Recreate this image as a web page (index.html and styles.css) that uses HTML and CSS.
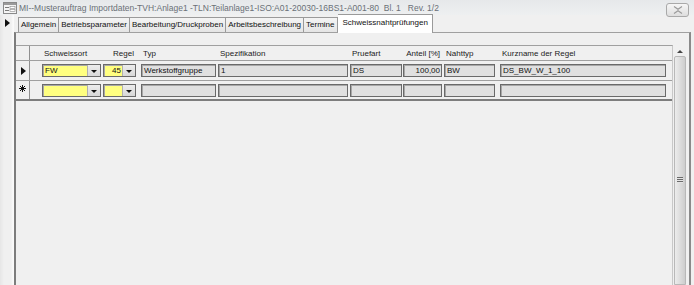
FILE: index.html
```html
<!DOCTYPE html>
<html lang="de">
<head>
    <meta charset="UTF-8" />
    <title>Schweissnahtprüfungen</title>
    <link rel="stylesheet" href="styles.css">
</head>
<body>
    <div class="titlebar">
        <svg class="app-icon" width="14" height="12" viewBox="0 0 14 12">
            <rect x="0.5" y="0.5" width="13" height="11" fill="#f4f4f4" stroke="#8a8a8a"/>
            <rect x="1" y="1" width="12" height="2" fill="#9a9a9a"/>
            <rect x="2" y="5" width="4" height="1" fill="#7a7a7a"/>
            <rect x="2" y="8" width="4" height="1" fill="#7a7a7a"/>
            <rect x="7" y="4.5" width="5" height="2" fill="#fff" stroke="#8a8a8a" stroke-width="0.6"/>
            <rect x="7" y="7.5" width="5" height="2" fill="#fff" stroke="#8a8a8a" stroke-width="0.6"/>
        </svg>
        <span class="title">MI--Musterauftrag Importdaten-TVH:Anlage1 -TLN:Teilanlage1-ISO:A01-20030-16BS1-A001-80&nbsp; Bl. 1 &nbsp; Rev. 1/2</span>
        <span class="close-btn">
            <svg width="10" height="8" viewBox="0 0 10 8">
                <path d="M1 0.5 L5 3.2 L9 0.5 M1 7.5 L5 4.8 L9 7.5" fill="none" stroke="#9a9a9a" stroke-width="1.2"/>
            </svg>
        </span>
    </div>

    <div class="main">
        <div class="recsel">
            <span class="rec-arrow"></span>
        </div>
        <div class="tabctl">
            <div class="tabs">
                <span class="tab">Allgemein</span>
                <span class="tab">Betriebsparameter</span>
                <span class="tab">Bearbeitung/Druckproben</span>
                <span class="tab">Arbeitsbeschreibung</span>
                <span class="tab">Termine</span>
                <span class="tab active">Schweissnahtprüfungen</span>
            </div>
            <div class="panel">
                <div class="sub-top"></div>
                <div class="sub">
                    <div class="sub-body">
                        <div class="row head">
                            <div class="sel"></div>
                            <div class="cell c-ort">Schweissort</div>
                            <div class="cell c-regel right">Regel</div>
                            <div class="cell c-typ">Typ</div>
                            <div class="cell c-spez">Spezifikation</div>
                            <div class="cell c-pruef">Pruefart</div>
                            <div class="cell c-anteil right">Anteil [%]</div>
                            <div class="cell c-naht">Nahttyp</div>
                            <div class="cell c-kurz">Kurzname der Regel</div>
                        </div>
                        <div class="row rec">
                            <div class="sel"><span class="cur-arrow"></span></div>
                            <div class="combo c-ort"><span class="combo-val">FW</span><span class="drop"></span></div>
                            <div class="combo c-regel"><span class="combo-val right">45</span><span class="drop"></span></div>
                            <div class="field c-typ">Werkstoffgruppe</div>
                            <div class="field c-spez">1</div>
                            <div class="field c-pruef">DS</div>
                            <div class="field c-anteil right">100,00</div>
                            <div class="field c-naht">BW</div>
                            <div class="field c-kurz">DS_BW_W_1_100</div>
                        </div>
                        <div class="row rec last">
                            <div class="sel">
                                <svg class="new-star" width="7" height="7" viewBox="0 0 7 7">
                                    <path d="M3.5 0 V7 M0 3.5 H7 M1 1 L6 6 M6 1 L1 6" stroke="#111" stroke-width="1"/>
                                </svg>
                            </div>
                            <div class="combo c-ort"><span class="combo-val"></span><span class="drop"></span></div>
                            <div class="combo c-regel"><span class="combo-val"></span><span class="drop"></span></div>
                            <div class="field c-typ"></div>
                            <div class="field c-spez"></div>
                            <div class="field c-pruef"></div>
                            <div class="field c-anteil"></div>
                            <div class="field c-naht"></div>
                            <div class="field c-kurz"></div>
                        </div>
                        <div class="detail"></div>
                    </div>
                    <div class="vscroll">
                        <span class="up-arrow"></span>
                        <div class="thumb"><span class="grip"></span></div>
                    </div>
                </div>
            </div>
        </div>
    </div>
</body>
</html>
```

FILE: styles.css
```css
body {
    margin: 0;
    width: 694px;
    height: 285px;
    overflow: hidden;
    background: #f0f0f0;
    color: #111;
    font-family: 'Liberation Sans', Arial, sans-serif;
    font-size: 8px;
    display: flex;
    flex-direction: column;
}
.titlebar {
    height: 15px;
    display: flex;
    align-items: center;
    background: linear-gradient(#e6e8ea, #eef0f1);
    flex-shrink: 0;
}
.app-icon {
    margin-left: 3px;
    margin-right: 2px;
}
.title {
    font-size: 8.5px;
    color: #6a7077;
    white-space: nowrap;
}
.close-btn {
    margin-left: auto;
    margin-right: 5px;
    margin-top: 4px;
    width: 21px;
    height: 12px;
    border: 1px solid #a9a9a9;
    border-radius: 3px;
    background: linear-gradient(#f6f6f6, #dedede);
    display: flex;
    align-items: center;
    justify-content: center;
}
.main {
    flex: 1;
    display: flex;
}
.recsel {
    width: 14px;
    flex-shrink: 0;
    background: linear-gradient(90deg, #e6e6e6 0, #f0f0f0 4px, #f0f0f0 11px, #fafafa 13px);
}
.rec-arrow {
    display: block;
    margin: 4px 0 0 5px;
    width: 0;
    height: 0;
    border-left: 5px solid #111;
    border-top: 4px solid transparent;
    border-bottom: 4px solid transparent;
}
.tabctl {
    flex: 1;
    display: flex;
    flex-direction: column;
    margin-right: 3px;
}
.tabs {
    height: 17px;
    display: flex;
    align-items: flex-end;
    padding-left: 4px;
    position: relative;
    z-index: 1;
}
.tab {
    height: 14px;
    line-height: 14px;
    padding: 0 2px;
    border: 1px solid #9a9a9a;
    border-left: none;
    border-bottom: none;
    background: linear-gradient(#f4f4f4, #e5e5e5);
    white-space: nowrap;
}
.tab:first-child {
    border-left: 1px solid #9a9a9a;
}
.tab.active {
    height: 18px;
    line-height: 16px;
    padding: 0 4px 0 5px;
    background: #fff;
    border-left: none;
    margin-bottom: -1px;
}
.panel {
    flex: 1;
    display: flex;
    flex-direction: column;
    border-top: 1px solid #a0a0a0;
    border-left: 2px solid #7d7d7d;
    border-right: 2px solid #8a8a8a;
}
.sub-top {
    height: 12px;
}
.sub {
    flex: 1;
    display: flex;
}
.sub-body {
    width: 656px;
    border-top: 1px solid #a0a0a0;
    border-right: 1px solid #c8c8c8;
    display: flex;
    flex-direction: column;
}
.row {
    display: flex;
    align-items: center;
    border-bottom: 1px solid #a0a0a0;
}
.row.head {
    height: 14px;
    color: #222;
}
.row.rec {
    height: 19px;
}
.row.last {
    height: 18px;
    border-bottom: 2px solid #7d7d7d;
}
.sel {
    width: 13px;
    height: 100%;
    border-right: 1px solid #909090;
    display: flex;
    align-items: center;
    justify-content: center;
}
.cur-arrow {
    width: 0;
    height: 0;
    border-left: 5px solid #111;
    border-top: 4px solid transparent;
    border-bottom: 4px solid transparent;
    margin-left: 1px;
}
.new-star {
    margin-top: -4px;
}
.cell {
    padding-left: 2px;
    box-sizing: border-box;
    white-space: nowrap;
}
.right {
    text-align: right;
    padding-right: 2px;
}
.c-ort { width: 59px; margin-left: 12px; }
.c-regel { width: 33px; margin-left: 2px; }
.c-typ { width: 75px; margin-left: 5px; }
.c-spez { width: 130px; margin-left: 2px; }
.c-pruef { width: 52px; margin-left: 2px; }
.c-anteil { width: 39px; margin-left: 1px; }
.c-naht { width: 51px; margin-left: 2px; }
.c-kurz { width: 166px; margin-left: 5px; }
.field,
.combo {
    height: 13px;
    box-sizing: border-box;
    border: 1px solid #6a6a6a;
    box-shadow: inset 1px 1px 0 #a8a8a8;
    white-space: nowrap;
    overflow: hidden;
}
.field {
    background: #e0e0e0;
    line-height: 11px;
    padding-left: 2px;
}
.field.right {
    padding-right: 1px;
}
.combo {
    display: flex;
    background: #ffff80;
}
.combo-val {
    flex: 1;
    line-height: 11px;
    padding-left: 2px;
}
.combo-val.right {
    padding-right: 1px;
}
.drop {
    width: 12px;
    background: linear-gradient(#ececec, #d8d8d8);
    border-left: 1px solid #b0b0b0;
    position: relative;
}
.drop::after {
    content: "";
    position: absolute;
    left: 3px;
    top: 5px;
    border-top: 3px solid #111;
    border-left: 3px solid transparent;
    border-right: 3px solid transparent;
}
.detail {
    flex: 1;
}
.vscroll {
    width: 12px;
    margin-left: 1px;
    display: flex;
    flex-direction: column;
    align-items: center;
}
.up-arrow {
    margin-top: 5px;
    width: 0;
    height: 0;
    border-bottom: 3px solid #444;
    border-left: 3px solid transparent;
    border-right: 3px solid transparent;
}
.thumb {
    margin-top: 3px;
    width: 10px;
    flex: 1;
    border: 1px solid #b8b8b8;
    border-radius: 2px 2px 0 0;
    background: linear-gradient(90deg, #ececec, #e0e0e0 40%, #cdcdcd);
    display: flex;
    align-items: flex-start;
    justify-content: center;
}
.grip {
    margin-top: 120px;
    width: 6px;
    height: 6px;
    background: repeating-linear-gradient(#6a6a6a 0 1px, #e4e4e4 1px 2px);
}
```
